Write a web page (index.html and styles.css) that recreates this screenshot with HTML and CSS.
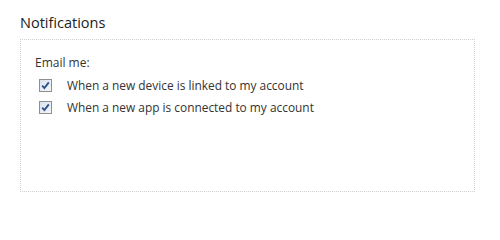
FILE: index.html
```html
<!DOCTYPE html>
<html>
<head>
<meta charset="utf-8">
<link rel="stylesheet" href="styles.css">
</head>
<body>
<div class="page">
  <h2 class="title">Notifications</h2>
  <div class="panel">
    <div class="label">Email me:</div>
    <label class="row">
      <span class="check"><svg viewBox="0 0 9 9" width="9" height="9"><path d="M1.2 4.6 L3.4 7 L7.8 1.4" fill="none" stroke="#2b4d8c" stroke-width="1.8"/></svg></span>
      <span class="text">When a new device is linked to my account</span>
    </label>
    <label class="row">
      <span class="check"><svg viewBox="0 0 9 9" width="9" height="9"><path d="M1.2 4.6 L3.4 7 L7.8 1.4" fill="none" stroke="#2b4d8c" stroke-width="1.8"/></svg></span>
      <span class="text">When a new app is connected to my account</span>
    </label>
  </div>
</div>
</body>
</html>
```

FILE: styles.css
```css
html, body {
  margin: 0;
  padding: 0;
  background: #ffffff;
}
.page {
  width: 500px;
  height: 211px;
  padding: 13px 0 0 20px;
  box-sizing: border-box;
  font-family: "Open Sans", "DejaVu Sans", sans-serif;
  color: #333333;
}
.title {
  margin: 0;
  font-size: 14.5px;
  font-weight: 500;
  line-height: 19px;
  color: #222222;
}
.panel {
  margin-top: 7px;
  width: 455px;
  height: 153px;
  box-sizing: border-box;
  border: 1px dotted #cfcfcf;
  padding: 14px 0 0 14px;
}
.label {
  font-size: 12px;
  line-height: 18px;
  margin-bottom: 2px;
}
.row {
  display: flex;
  align-items: center;
  height: 22px;
  padding-left: 4px;
  font-size: 11.9px;
}
.check {
  width: 11px;
  height: 11px;
  border: 1px solid #8e8f8f;
  background: linear-gradient(135deg, #d9e3ee 0%, #f3f6f9 100%);
  display: flex;
  align-items: center;
  justify-content: center;
  margin-right: 15px;
}
.check svg {
  display: block;
}
```
